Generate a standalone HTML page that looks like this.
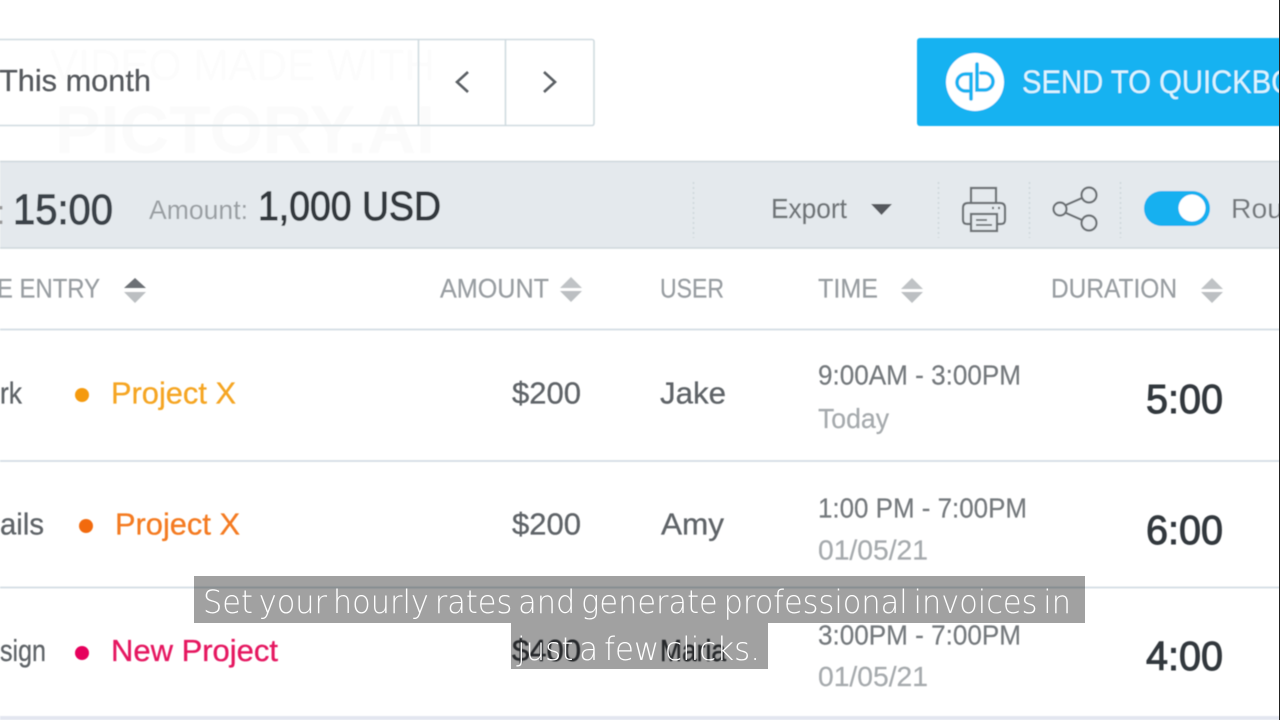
<!DOCTYPE html>
<html><head><meta charset="utf-8"><title>Time report</title>
<style>
html,body{margin:0;padding:0;background:#fff;width:1280px;height:720px;overflow:hidden}
svg{display:block}
text{font-family:"Liberation Sans",sans-serif}
.h{font-size:27px;fill:#989da1;stroke:#989da1;stroke-width:.2}
.t{font-size:31px;fill:#5f6468;stroke:#5f6468;stroke-width:.3}
.s{font-size:28px;fill:#75797d;stroke:#75797d;stroke-width:.2}
.d{font-size:28px;fill:#a6aaad;stroke:#a6aaad;stroke-width:.2}
.b{font-size:41px;fill:#33393e;stroke:#33393e;stroke-width:1}
.p{font-size:31px;stroke-width:.3}
.u{font-size:31px;fill:#3c4044;stroke:#3c4044;stroke-width:.5}
.c{font-size:32px;fill:#fff;font-family:"DejaVu Sans","Liberation Sans",sans-serif;font-weight:200;word-spacing:-4px}
</style></head><body>
<svg width="1280" height="720" viewBox="0 0 1280 720" xmlns="http://www.w3.org/2000/svg">
<defs><filter id="bl" x="-2%" y="-2%" width="104%" height="104%"><feGaussianBlur stdDeviation="0.55"/></filter></defs>
<rect width="1280" height="720" fill="#fff"/>
<g filter="url(#bl)">
<text x="50" y="80" font-size="44" fill="#fcfcfc" textLength="385" lengthAdjust="spacingAndGlyphs">VIDEO MADE WITH</text>
<text x="55" y="153" font-size="68" font-weight="bold" fill="#fbfbfb" textLength="380" lengthAdjust="spacingAndGlyphs">PICTORY.AI</text>

<rect x="-5" y="39.5" width="599" height="86" rx="2" fill="none" stroke="#d0dbe0" stroke-width="1.6"/>
<path d="M418.5 39V126M505.5 39V126" stroke="#d0dbe0" stroke-width="1.6"/>
<text x="-1" y="91" font-size="31" fill="#55595d" stroke="#55595d" stroke-width=".3" textLength="152" lengthAdjust="spacingAndGlyphs">This month</text>
<path d="M468 72L457 82L468 92" fill="none" stroke="#5a5f63" stroke-width="2.6"/>
<path d="M544 72L555 82L544 92" fill="none" stroke="#5a5f63" stroke-width="2.6"/>

<rect x="917" y="38" width="370" height="88" rx="3" fill="#12b2f1"/>
<circle cx="975" cy="82" r="29" fill="#fff"/>
<g fill="none" stroke="#12b2f1" stroke-width="3.600" stroke-linecap="round">
<path d="M971 99V74H965.500a8.500 8.500 0 0 0 0 17H968"/>
<path d="M977 64V90H984.500a8.500 8.500 0 0 0 0-17H981"/>
</g>
<text x="1022" y="93" font-size="32" fill="#def4fe" textLength="272" lengthAdjust="spacingAndGlyphs">SEND TO QUICKBO</text>

<rect x="0" y="161" width="1280" height="87" fill="#e4e9ed"/>
<path d="M0 161.500H1280M0 248H1280" stroke="#ced7dc" stroke-width="1.500"/>
<text x="-4" y="224" font-size="34" fill="#999">:</text>
<text x="13" y="224" font-size="43" fill="#3a4248" stroke="#3a4248" stroke-width="1" textLength="100" lengthAdjust="spacingAndGlyphs">15:00</text>
<text x="149" y="219" font-size="27" fill="#9a9fa3" textLength="99" lengthAdjust="spacingAndGlyphs">Amount:</text>
<text x="258" y="220" font-size="41" fill="#33393e" stroke="#33393e" stroke-width="1" textLength="183" lengthAdjust="spacingAndGlyphs">1,000 USD</text>
<path d="M693.500 182V238M938.500 182V238M1029.500 182V238M1120.500 182V238" stroke="#d2dade" stroke-width="2" stroke-dasharray="2 3"/>
<text x="771" y="218" font-size="28" fill="#6f7478" stroke="#6f7478" stroke-width=".2" textLength="76" lengthAdjust="spacingAndGlyphs">Export</text>
<path d="M871 204H892L881.500 215Z" fill="#55595d"/>

<g fill="none" stroke="#6a6f73" stroke-width="2.200">
<path d="M971 203V188H996V203"/>
<path d="M971 224H967Q963 224 963 220V208Q963 203 968 203H1000Q1005 203 1005 208V220Q1005 224 1001 224H997"/>
<rect x="971" y="214" width="26" height="17"/>
<path d="M976 220H987M976 225H992" stroke-width="1.800"/>
<path d="M992 208H994M998 208H1000"/>
</g>
<g fill="none" stroke="#6a6f73" stroke-width="2.200">
<circle cx="1089" cy="195" r="7.500"/>
<circle cx="1089" cy="223" r="7.500"/>
<circle cx="1060" cy="209" r="6.500"/>
<path d="M1066 205L1082 198M1066 213L1082 220"/>
</g>
<rect x="1144" y="191" width="66" height="35" rx="17.500" fill="#15b0f0"/>
<circle cx="1192" cy="208" r="13.500" fill="#fff"/>
<text x="1231" y="218" font-size="28" fill="#75797d" textLength="52" lengthAdjust="spacingAndGlyphs">Rou</text>

<text class="h" x="-3" y="297.500" textLength="103" lengthAdjust="spacingAndGlyphs">E ENTRY</text>
<path d="M124 288L135 278L146 288Z" fill="#6c7074"/><path d="M124 292L135 303L146 292Z" fill="#bcbfc2"/>
<text class="h" x="440" y="297.500" textLength="109" lengthAdjust="spacingAndGlyphs">AMOUNT</text>
<path d="M560 288L571 277L582 288Z" fill="#c0c3c6"/><path d="M560 291L571 302L582 291Z" fill="#bcbfc2"/>
<text class="h" x="660" y="297.500" textLength="64" lengthAdjust="spacingAndGlyphs">USER</text>
<text class="h" x="818" y="297.500" textLength="60" lengthAdjust="spacingAndGlyphs">TIME</text>
<path d="M901 289L912 278L923 289Z" fill="#c0c3c6"/><path d="M901 292L912 303L923 292Z" fill="#bcbfc2"/>
<text class="h" x="1051" y="297.500" textLength="126" lengthAdjust="spacingAndGlyphs">DURATION</text>
<path d="M1201 289L1212 278L1223 289Z" fill="#c0c3c6"/><path d="M1201 292L1212 303L1223 292Z" fill="#bcbfc2"/>

<path d="M0 329.500H1280M0 461H1280M0 587.500H1280" stroke="#d3dde3" stroke-width="1.800"/>
<rect x="0" y="716" width="1280" height="4" fill="#e3e6f0"/>

<text class="t" x="0" y="403.500" textLength="22" lengthAdjust="spacingAndGlyphs">rk</text>
<circle cx="82" cy="395" r="7" fill="#f59a0c"/>
<text class="p" x="111" y="403.500" fill="#f5a524" stroke="#f5a524" textLength="125" lengthAdjust="spacingAndGlyphs">Project X</text>
<text class="t" x="512" y="403.500" textLength="69" lengthAdjust="spacingAndGlyphs">$200</text>
<text class="t" x="660" y="403.500" textLength="66" lengthAdjust="spacingAndGlyphs">Jake</text>
<text class="s" x="818" y="384.500" textLength="203" lengthAdjust="spacingAndGlyphs">9:00AM - 3:00PM</text>
<text class="d" x="818" y="428" textLength="71" lengthAdjust="spacingAndGlyphs">Today</text>
<text class="b" x="1146" y="413" textLength="77" lengthAdjust="spacingAndGlyphs">5:00</text>

<text class="t" x="0" y="534.500" textLength="44" lengthAdjust="spacingAndGlyphs">ails</text>
<circle cx="86" cy="526" r="7" fill="#f26a0f"/>
<text class="p" x="115" y="534.500" fill="#f47a20" stroke="#f47a20" textLength="125" lengthAdjust="spacingAndGlyphs">Project X</text>
<text class="t" x="512" y="534.500" textLength="69" lengthAdjust="spacingAndGlyphs">$200</text>
<text class="t" x="661" y="534.500" textLength="63" lengthAdjust="spacingAndGlyphs">Amy</text>
<text class="s" x="818" y="517.500" textLength="209" lengthAdjust="spacingAndGlyphs">1:00 PM - 7:00PM</text>
<text class="d" x="818" y="559.500" textLength="110" lengthAdjust="spacingAndGlyphs">01/05/21</text>
<text class="b" x="1146" y="544" textLength="77" lengthAdjust="spacingAndGlyphs">6:00</text>

<text class="t" x="0" y="661" textLength="46" lengthAdjust="spacingAndGlyphs">sign</text>
<circle cx="82" cy="653" r="7" fill="#e6005c"/>
<text class="p" x="111" y="661" fill="#e5135f" stroke="#e5135f" textLength="167" lengthAdjust="spacingAndGlyphs">New Project</text>
<text class="u" x="512" y="661" textLength="69" lengthAdjust="spacingAndGlyphs">$400</text>
<text class="u" x="660" y="661" textLength="66" lengthAdjust="spacingAndGlyphs">Maria</text>
<text class="s" x="818" y="644.500" textLength="203" lengthAdjust="spacingAndGlyphs">3:00PM - 7:00PM</text>
<text class="d" x="818" y="686" textLength="110" lengthAdjust="spacingAndGlyphs">01/05/21</text>
<text class="b" x="1146" y="670" textLength="77" lengthAdjust="spacingAndGlyphs">4:00</text>
</g>

<rect x="194" y="576" width="891" height="47" fill="#000" fill-opacity=".37"/>
<rect x="511" y="623" width="257" height="46" fill="#000" fill-opacity=".37"/>
<text class="c" x="203" y="613" textLength="868" lengthAdjust="spacingAndGlyphs">Set your hourly rates and generate professional invoices in</text>
<text class="c" x="517" y="660" textLength="243" lengthAdjust="spacingAndGlyphs">just a few clicks.</text>
<rect x="1279" y="0" width="1" height="720" fill="#222"/>
</svg>
</body></html>
